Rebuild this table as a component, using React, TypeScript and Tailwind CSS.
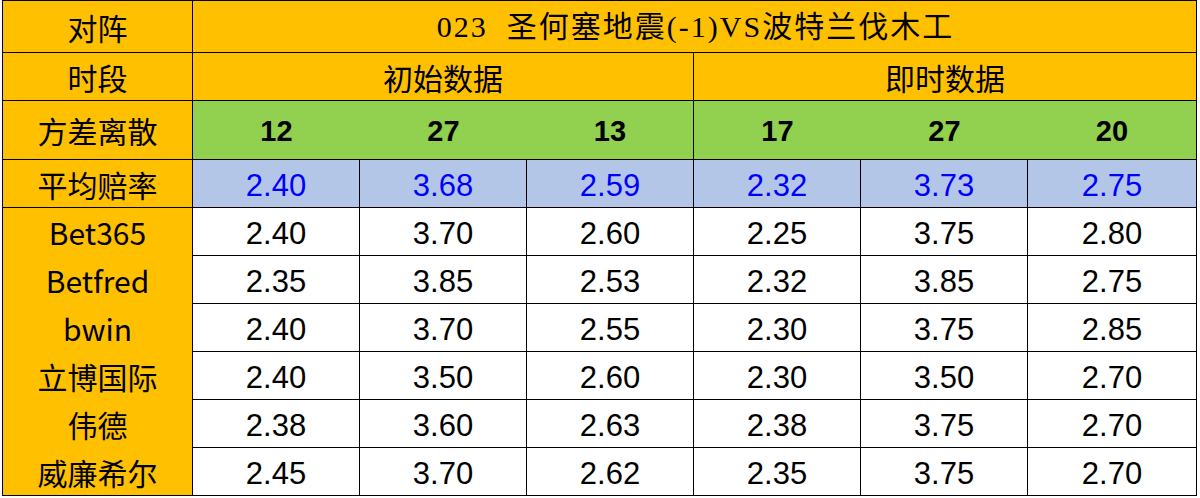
import React from "react";

const cjk = "font-['Noto_Sans_CJK_SC',sans-serif]";
const num = "font-['Liberation_Sans',Arial,sans-serif]";

const avg = ["2.40", "3.68", "2.59", "2.32", "3.73", "2.75"];
const spread = ["12", "27", "13", "17", "27", "20"];

const books: { name: string; odds: string[] }[] = [
  { name: "Bet365", odds: ["2.40", "3.70", "2.60", "2.25", "3.75", "2.80"] },
  { name: "Betfred", odds: ["2.35", "3.85", "2.53", "2.32", "3.85", "2.75"] },
  { name: "bwin", odds: ["2.40", "3.70", "2.55", "2.30", "3.75", "2.85"] },
  { name: "立博国际", odds: ["2.40", "3.50", "2.60", "2.30", "3.50", "2.70"] },
  { name: "伟德", odds: ["2.38", "3.60", "2.63", "2.38", "3.75", "2.70"] },
  { name: "威廉希尔", odds: ["2.45", "3.70", "2.62", "2.35", "3.75", "2.70"] },
];

function Label({ text, last = true }: { text: string; last?: boolean }) {
  return (
    <div
      className={`flex items-center justify-center bg-[#FFC000] border-r border-black text-[30px] leading-none text-black ${cjk} ${
        last ? "border-b" : ""
      }`}
    >
      {text}
    </div>
  );
}

export default function App() {
  return (
    <div className="w-[1200px] h-[498px] bg-white overflow-hidden">
      <div className="ml-[2px] grid grid-cols-[190px_167px_167px_167px_167px_167px_169px] grid-rows-[52px_48px_59px_48px_48px_48px_48px_48px_48px_48px] border-l border-t border-black w-fit">
        {/* 对阵 */}
        <Label text="对阵" />
        <div className="col-span-6 flex items-center justify-center bg-[#FFC000] border-r border-b border-black text-[30px] leading-none tracking-[2px] text-black font-['Liberation_Serif','Noto_Sans_CJK_SC',serif] pl-[2px]">
          023&nbsp;&nbsp;圣何塞地震(-1)VS波特兰伐木工
        </div>

        {/* 时段 */}
        <Label text="时段" />
        <div className={`col-span-3 flex items-center justify-center bg-[#FFC000] border-r border-b border-black text-[30px] leading-none ${cjk}`}>
          初始数据
        </div>
        <div className={`col-span-3 flex items-center justify-center bg-[#FFC000] border-r border-b border-black text-[30px] leading-none ${cjk}`}>
          即时数据
        </div>

        {/* 方差离散 */}
        <Label text="方差离散" />
        {spread.map((v, i) => (
          <div
            key={i}
            className={`flex items-center justify-center bg-[#92D050] border-b border-black text-[29px] font-bold leading-none text-black pt-[2px] ${num} ${
              i === 2 || i === 5 ? "border-r" : ""
            }`}
          >
            {v}
          </div>
        ))}

        {/* 平均赔率 */}
        <Label text="平均赔率" />
        {avg.map((v, i) => (
          <div
            key={i}
            className={`flex items-center justify-center bg-[#B4C6E7] border-r border-b border-black text-[31px] leading-none text-[#0000FF] pt-[4px] ${num}`}
          >
            {v}
          </div>
        ))}

        {books.map((b, r) => (
          <React.Fragment key={b.name}>
            <Label text={b.name} last={r === books.length - 1} />
            {b.odds.map((v, i) => (
              <div
                key={i}
                className={`flex items-center justify-center bg-white border-r border-b border-black text-[31px] leading-none text-black pt-[4px] ${num}`}
              >
                {v}
              </div>
            ))}
          </React.Fragment>
        ))}
      </div>
    </div>
  );
}
